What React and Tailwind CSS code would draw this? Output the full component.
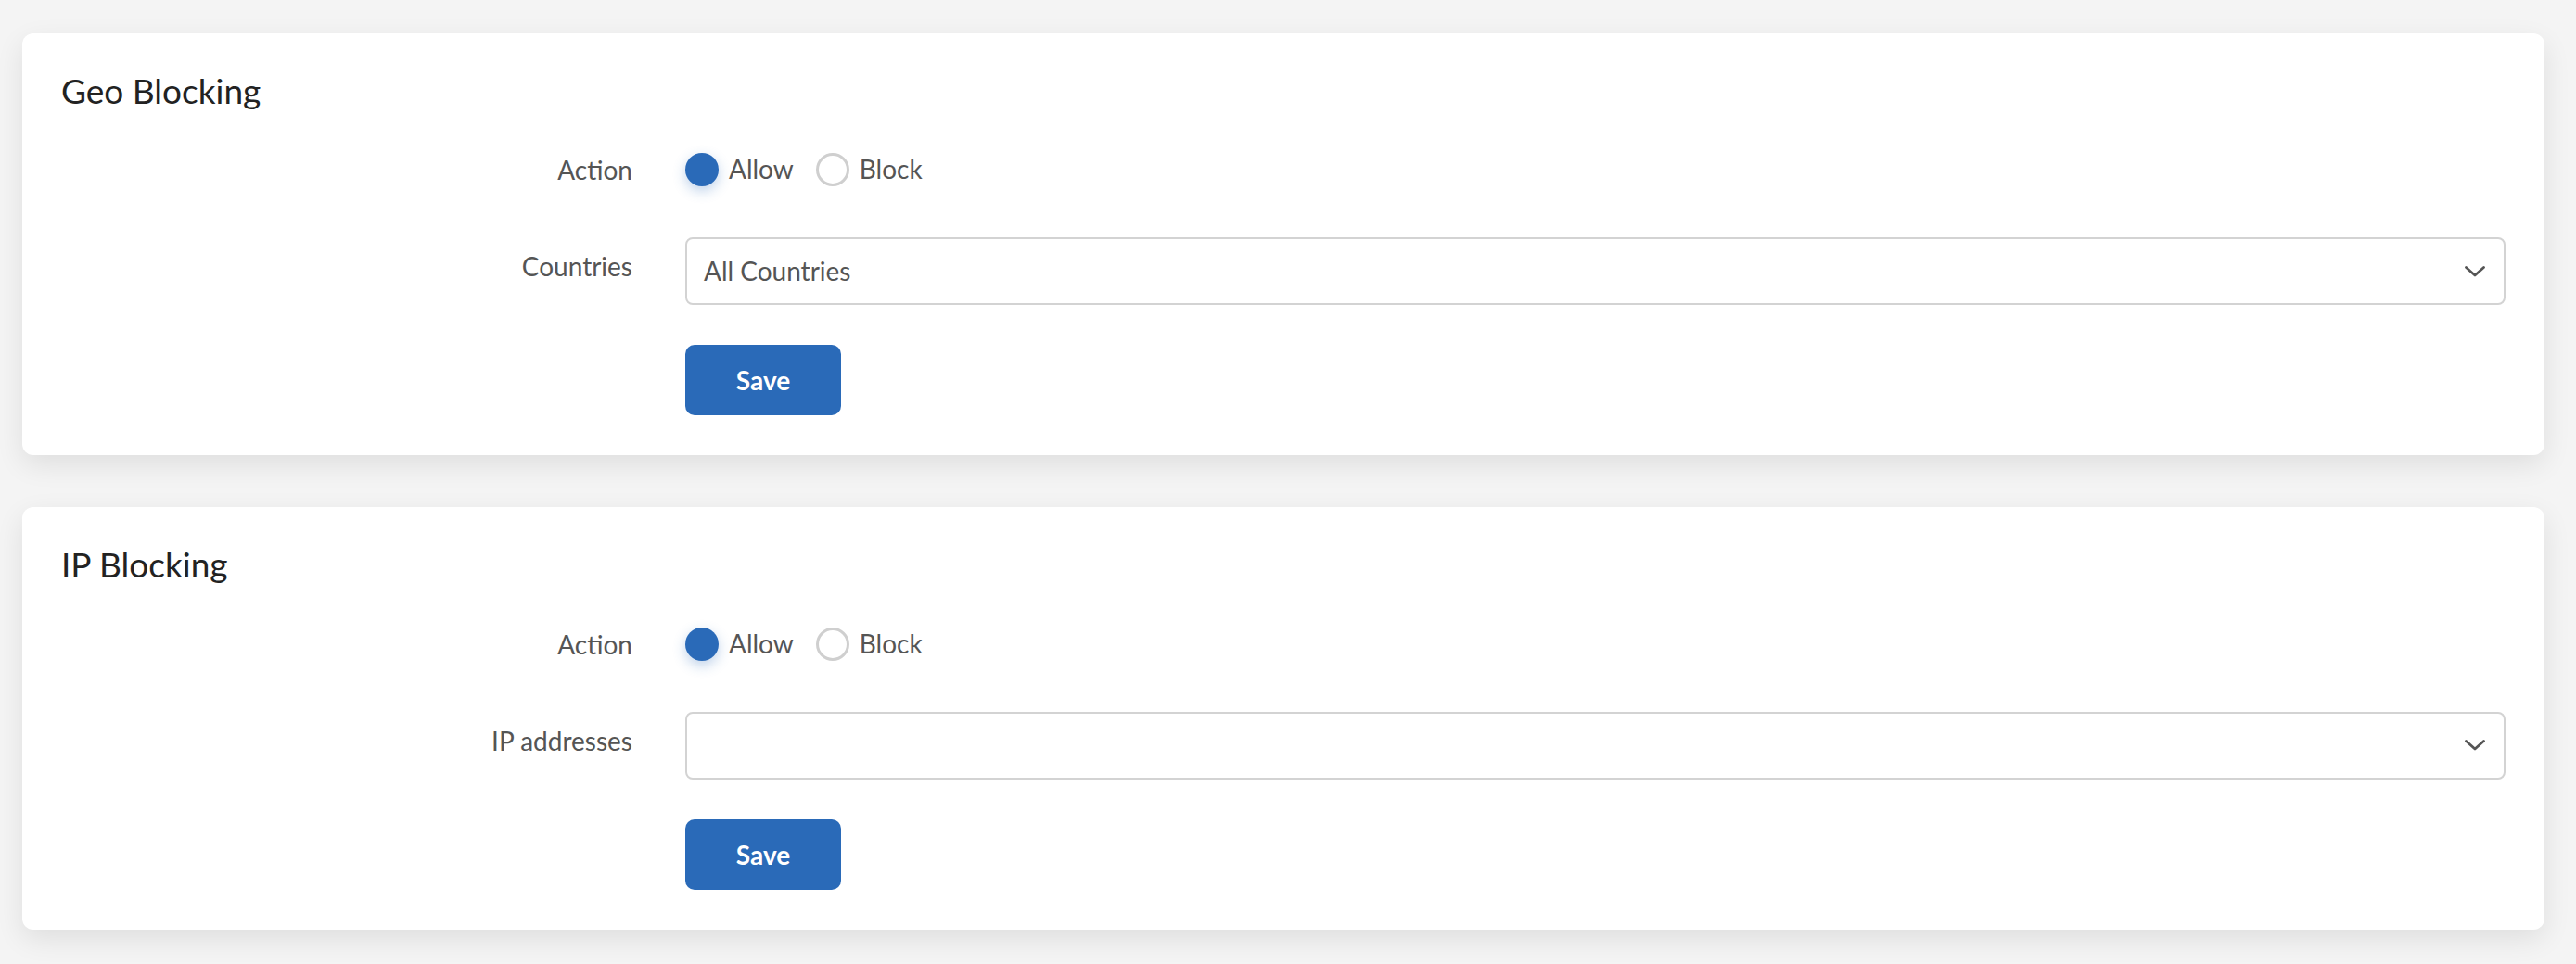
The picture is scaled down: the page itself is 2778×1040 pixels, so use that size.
import { useState } from "react";

const font = { fontFamily: "Lato, 'Open Sans', sans-serif" };

function Radio({ checked, label, onClick }) {
  return (
    <button type="button" onClick={onClick} className="flex items-center gap-[11px]">
      {checked ? (
        <span className="w-[36px] h-[36px] rounded-full bg-[#2a6ab8] shadow-[0_5px_14px_rgba(42,106,184,0.3)]" />
      ) : (
        <span className="w-[36px] h-[36px] rounded-full bg-white border-[3px] border-[#cfcfcf]" />
      )}
      <span className="text-[28px] leading-[1.2] text-[#555]">{label}</span>
    </button>
  );
}

function Chevron() {
  return (
    <svg width="22" height="12" viewBox="0 0 22 12" fill="none">
      <polyline
        points="1.5,1.5 11,10 20.5,1.5"
        stroke="#555"
        strokeWidth="2.8"
        strokeLinecap="round"
        strokeLinejoin="round"
      />
    </svg>
  );
}

function BlockingCard({ title, fieldLabel, value }) {
  const [action, setAction] = useState("allow");

  return (
    <div className="bg-white rounded-[12px] shadow-[0_10px_30px_rgba(0,0,0,0.09)] px-[42px] pt-[40px] pb-[43px]">
      <h2 className="text-[37px] leading-[1.17] text-[#222]">{title}</h2>

      <div className="grid grid-cols-[616px_1fr] gap-x-[57px] mt-[46px]">
        {/* ACTION */}
        <div className="text-right text-[28px] leading-[1.2] text-[#555] pt-[2px]">Action</div>
        <div className="flex items-center gap-[24px] h-[36px]">
          <Radio checked={action === "allow"} label="Allow" onClick={() => setAction("allow")} />
          <Radio checked={action === "block"} label="Block" onClick={() => setAction("block")} />
        </div>

        {/* SELECT */}
        <div className="text-right text-[28px] leading-[1.2] text-[#555] pt-[15px] mt-[55px]">
          {fieldLabel}
        </div>
        <div className="mt-[55px] h-[73px] rounded-[8px] border-2 border-[#d3d3d3] flex items-center justify-between pl-[18px] pr-[20px]">
          <span className="text-[28px] leading-[1.2] text-[#555]">{value}</span>
          <Chevron />
        </div>

        {/* SAVE */}
        <div />
        <div className="mt-[43px]">
          <button className="w-[168px] h-[76px] rounded-[10px] bg-[#2a6ab8] text-white text-[28px] font-bold">
            Save
          </button>
        </div>
      </div>
    </div>
  );
}

export default function App() {
  return (
    <div style={font} className="min-h-[1040px] bg-[#f4f4f4] pl-[24px] pr-[34px] pt-[36px] pb-[38px]">
      <div className="flex flex-col gap-[56px]">
        <BlockingCard title="Geo Blocking" fieldLabel="Countries" value="All Countries" />
        <BlockingCard title="IP Blocking" fieldLabel="IP addresses" value="" />
      </div>
    </div>
  );
}
